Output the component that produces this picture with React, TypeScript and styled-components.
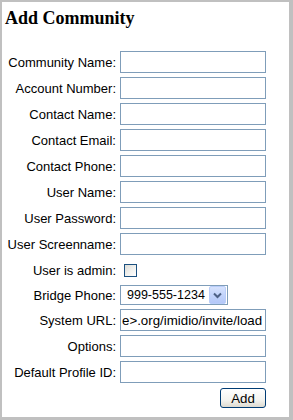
import React from "react";
import styled, { createGlobalStyle } from "styled-components";

const Global = createGlobalStyle`
  html, body { margin: 0; padding: 0; background: #fff; }
  body { font-family: "Liberation Sans", Arial, sans-serif; }
`;

const Frame = styled.div`
  box-sizing: border-box;
  width: 293px;
  height: 420px;
  border-style: solid;
  border-color: #c0c0c0;
  border-width: 2px 4px 3px 2px;
  background: #fff;
`;

const Heading = styled.h2`
  margin: 6px 0 23px 3px;
  font-family: "Liberation Serif", "Times New Roman", serif;
  font-weight: bold;
  font-size: 18px;
  line-height: 20px;
  color: #000;
`;

const Form = styled.form`
  display: grid;
  grid-template-columns: 114px 146px;
  column-gap: 4px;
  row-gap: 4px;
  align-items: center;
  margin: 0;
`;

const Label = styled.label`
  text-align: right;
  font-size: 13px;
  line-height: 15px;
  color: #000;
  white-space: nowrap;
`;

const TextInput = styled.input`
  box-sizing: border-box;
  width: 146px;
  height: 22px;
  margin: 0;
  padding: 0 1px;
  border: 1px solid #7f9db9;
  font-family: "Liberation Sans", Arial, sans-serif;
  font-size: 13.3px;
  color: #000;
  background: #fff;
  outline: none;
`;

const CheckCell = styled.div`
  height: 22px;
  display: flex;
  align-items: center;
  padding-left: 4px;
`;

const Check = styled.input`
  appearance: none;
  box-sizing: border-box;
  width: 13px;
  height: 13px;
  margin: 0;
  border: 1px solid #1c5180;
  background: linear-gradient(135deg, #dcdcd7 0%, #f2f2ef 55%, #ffffff 100%);
`;

const SelectBox = styled.div`
  box-sizing: border-box;
  width: 108px;
  height: 20px;
  border: 1px solid #7f9db9;
  display: flex;
  align-items: center;
  padding: 1px;
  background: #fff;
`;

const Select = styled.select`
  appearance: none;
  flex: 1;
  min-width: 0;
  height: 16px;
  margin: 0;
  padding: 0 0 0 5px;
  border: none;
  background: transparent;
  font-family: "Liberation Sans", Arial, sans-serif;
  font-size: 12.5px;
  line-height: 16px;
  color: #000;
  outline: none;
`;

const ArrowButton = styled.span`
  box-sizing: border-box;
  width: 17px;
  height: 18px;
  border: 1px solid #b9cdf9;
  border-radius: 2px;
  background: linear-gradient(180deg, #d6e2fd 0%, #c2d4fb 50%, #b4c8f8 100%);
  display: flex;
  align-items: center;
  justify-content: center;
`;

const ButtonRow = styled.div`
  grid-column: 1 / span 2;
  display: flex;
  justify-content: flex-end;
  padding-top: 1px;
`;

const Button = styled.button`
  box-sizing: border-box;
  width: 46px;
  height: 20px;
  margin: 0;
  padding: 0;
  border: 1px solid #003c74;
  border-radius: 3px;
  background: linear-gradient(180deg, #ffffff 0%, #f4f4f0 60%, #dcdad0 100%);
  font-family: "Liberation Sans", Arial, sans-serif;
  font-size: 13.3px;
  color: #000;
`;

const fields1 = [
  "Community Name:",
  "Account Number:",
  "Contact Name:",
  "Contact Email:",
  "Contact Phone:",
  "User Name:",
  "User Password:",
  "User Screenname:",
];

export default function App() {
  return (
    <>
      <Global />
      <Frame>
        <Heading>Add Community</Heading>
        <Form onSubmit={(e) => e.preventDefault()}>
          {fields1.map((f) => (
            <React.Fragment key={f}>
              <Label>{f}</Label>
              <TextInput type={f === "User Password:" ? "password" : "text"} />
            </React.Fragment>
          ))}
          <Label>User is admin:</Label>
          <CheckCell>
            <Check type="checkbox" />
          </CheckCell>
          <Label>Bridge Phone:</Label>
          <SelectBox>
            <Select defaultValue="999-555-1234">
              <option>999-555-1234</option>
            </Select>
            <ArrowButton>
              <svg width="9" height="7" viewBox="0 0 9 7">
                <path d="M1 1.5 L4.5 5 L8 1.5" fill="none" stroke="#4d6185" strokeWidth="2" />
              </svg>
            </ArrowButton>
          </SelectBox>
          <Label>System URL:</Label>
          <TextInput type="text" defaultValue="e>.org/imidio/invite/load" />
          <Label>Options:</Label>
          <TextInput type="text" />
          <Label>Default Profile ID:</Label>
          <TextInput type="text" />
          <ButtonRow>
            <Button type="submit">Add</Button>
          </ButtonRow>
        </Form>
      </Frame>
    </>
  );
}
